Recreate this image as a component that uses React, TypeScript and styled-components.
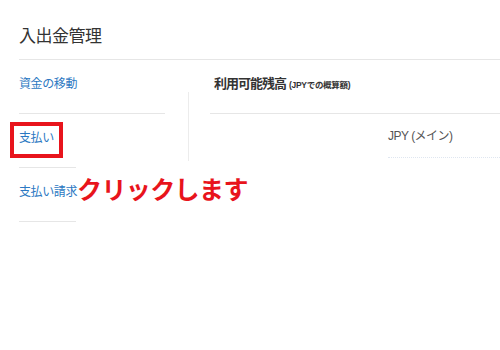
import React from 'react'
import styled, { createGlobalStyle } from 'styled-components'

const GlobalStyle = createGlobalStyle`
  html, body {
    margin: 0;
    padding: 0;
    background: #fff;
  }
  body {
    font-family: 'Liberation Sans', 'Noto Sans CJK JP', sans-serif;
    color: #333;
  }
`

const Page = styled.div`
  width: 500px;
  height: 350px;
  overflow: hidden;
  padding-left: 19px;
  box-sizing: border-box;
`

const Title = styled.h1`
  margin: 0;
  padding-top: 26px;
  height: 60px;
  box-sizing: border-box;
  font-size: 17px;
  font-weight: 400;
  letter-spacing: -0.5px;
  line-height: 22px;
  color: #333;
  border-bottom: 1px solid #e6e6e6;
`

const Body = styled.div`
  display: flex;
  align-items: flex-start;
`

const Nav = styled.ul`
  list-style: none;
  margin: 0;
  padding: 0;
  width: 146px;
`

const NavItem = styled.li<{ lineWidth: number }>`
  position: relative;
  display: flex;
  align-items: flex-start;
  height: 54px;
  padding-top: 16px;
  box-sizing: border-box;

  &::after {
    content: '';
    position: absolute;
    left: 0;
    bottom: 0;
    width: ${({ lineWidth }) => lineWidth}px;
    border-bottom: 1px solid #e6e6e6;
  }
`

const NavLink = styled.a`
  font-size: 12px;
  line-height: 16px;
  letter-spacing: -0.4px;
  color: #2b78c2;
  text-decoration: none;
  white-space: nowrap;
`

const Highlight = styled.span`
  position: absolute;
  left: -9px;
  top: 8px;
  width: 53px;
  height: 36px;
  border: 4px solid #e8141c;
  box-sizing: border-box;
`

const Callout = styled.span`
  position: absolute;
  left: 58px;
  top: 6px;
  font-size: 25px;
  font-weight: 700;
  letter-spacing: -0.6px;
  line-height: 32px;
  color: #e8141c;
  white-space: nowrap;
`

const Divider = styled.div`
  width: 1px;
  height: 69px;
  margin: 32px 21px 0 23px;
  background: #ececec;
`

const Panel = styled.section`
  flex: 1;
`

const PanelHead = styled.div`
  height: 54px;
  padding: 15px 0 0 4px;
  box-sizing: border-box;
  border-bottom: 1px solid #e6e6e6;
  display: flex;
  align-items: baseline;
  gap: 3px;
`

const PanelTitle = styled.span`
  font-size: 13px;
  font-weight: 700;
  letter-spacing: -1px;
  line-height: 18px;
  color: #333;
`

const PanelNote = styled.span`
  font-size: 8.5px;
  font-weight: 700;
  letter-spacing: -0.3px;
  color: #333;
`

const Currency = styled.div`
  margin-left: 178px;
  height: 44px;
  padding-top: 14px;
  box-sizing: border-box;
  font-size: 12px;
  line-height: 16px;
  letter-spacing: -0.5px;
  color: #555;
  border-bottom: 1px dotted #dfe6f0;
`

export default function App() {
  return (
    <Page>
      <GlobalStyle />
      <Title>入出金管理</Title>
      <Body>
        <Nav>
          <NavItem lineWidth={146}>
            <NavLink href="#">資金の移動</NavLink>
          </NavItem>
          <NavItem lineWidth={57}>
            <NavLink href="#">支払い</NavLink>
            <Highlight />
          </NavItem>
          <NavItem lineWidth={57}>
            <NavLink href="#">支払い請求</NavLink>
            <Callout>クリックします</Callout>
          </NavItem>
        </Nav>
        <Divider />
        <Panel>
          <PanelHead>
            <PanelTitle>利用可能残高</PanelTitle>
            <PanelNote>(JPYでの概算額)</PanelNote>
          </PanelHead>
          <Currency>JPY (メイン)</Currency>
        </Panel>
      </Body>
    </Page>
  )
}
